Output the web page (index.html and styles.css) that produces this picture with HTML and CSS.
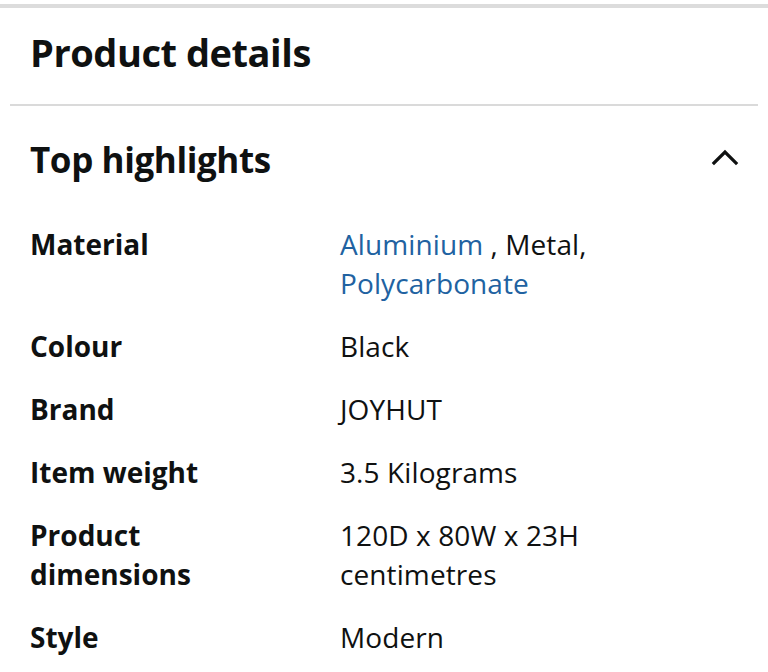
FILE: index.html
```html
<!DOCTYPE html>
<html lang="en">
<head>
<meta charset="utf-8">
<title>Product details</title>
<link rel="stylesheet" href="styles.css">
</head>
<body>
<div class="topbar"></div>
<section class="details">
  <h1 class="title">Product details</h1>
  <hr class="divider">
  <div class="section-head">
    <h2 class="section-title">Top highlights</h2>
    <svg class="chevron" width="28" height="20" viewBox="0 0 28 20" aria-hidden="true">
      <polyline points="3,16 14,5 25,16" fill="none" stroke="#0f1111" stroke-width="3.2" stroke-linecap="square" stroke-linejoin="miter"/>
    </svg>
  </div>
  <dl class="specs">
    <dt class="label">Material</dt>
    <dd class="value"><a class="link" href="#">Aluminium</a> , Metal, <a class="link" href="#">Polycarbonate</a></dd>
    <dt class="label">Colour</dt>
    <dd class="value">Black</dd>
    <dt class="label">Brand</dt>
    <dd class="value">JOYHUT</dd>
    <dt class="label">Item weight</dt>
    <dd class="value">3.5 Kilograms</dd>
    <dt class="label">Product dimensions</dt>
    <dd class="value">120D x 80W x 23H centimetres</dd>
    <dt class="label">Style</dt>
    <dd class="value">Modern</dd>
  </dl>
</section>
</body>
</html>
```
FILE: styles.css
```css
html, body {
  margin: 0;
  padding: 0;
  background: #ffffff;
}
body {
  font-family: "Open Sans", "Noto Sans", Arial, sans-serif;
  color: #0f1111;
  padding-top: 4px;
  overflow: hidden;
}
.topbar {
  height: 4px;
  background: #dcdcdc;
}
.details {
  padding: 22px 0 0 0;
}
.title {
  margin: 0 0 0 30px;
  font-size: 38px;
  line-height: 44px;
  font-weight: 700;
  letter-spacing: -0.45px;
}
.divider {
  margin: 30px 10px 0 10px;
  border: 0;
  height: 2px;
  background: #dadada;
}
.section-head {
  display: flex;
  align-items: center;
  justify-content: space-between;
  margin-top: 34px;
  padding: 0 29px 0 30px;
}
.section-title {
  margin: 0;
  font-size: 35px;
  line-height: 40px;
  font-weight: 700;
  letter-spacing: -0.4px;
}
.chevron {
  display: block;
  margin-top: -6px;
}
.specs {
  display: grid;
  grid-template-columns: 310px 1fr;
  row-gap: 24px;
  margin: 45px 30px 0 30px;
}
.label {
  margin: 0;
  font-size: 28px;
  line-height: 39px;
  font-weight: 700;
  padding-right: 50px;
}
.value {
  margin: 0;
  font-size: 28px;
  line-height: 39px;
  font-weight: 400;
  letter-spacing: 0.1px;
}
.link {
  color: #2162a1;
  text-decoration: none;
}
```
